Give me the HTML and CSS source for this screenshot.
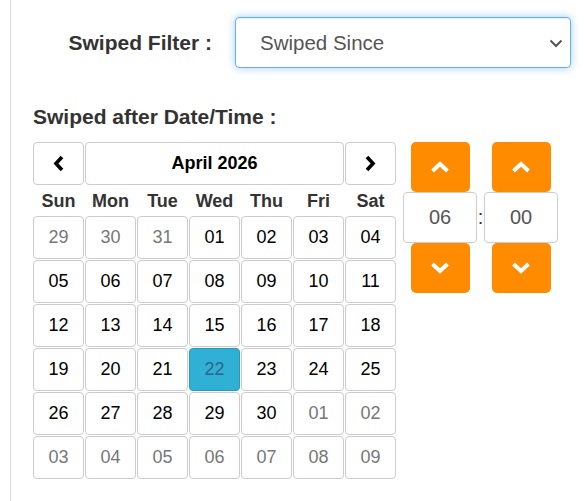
FILE: index.html
```html
<!DOCTYPE html>
<html>
<head>
<meta charset="utf-8">
<link rel="stylesheet" href="styles.css">
</head>
<body>
<div class="page">
  <div class="filter-row">
    <label class="filter-label">Swiped Filter :</label>
    <div class="select">
      <span>Swiped Since</span>
      <svg class="caret" width="14" height="9" viewBox="0 0 14 9"><polyline points="1.5,1.5 7,7 12.5,1.5" fill="none" stroke="#555" stroke-width="2"/></svg>
    </div>
  </div>
  <div class="section-title">Swiped after Date/Time :</div>
  <div class="picker">
    <div class="calendar">
      <div class="btn nav"><svg width="11" height="17" viewBox="0 0 11 17"><polyline points="9,2 3,8.5 9,15" fill="none" stroke="#000" stroke-width="3.6"/></svg></div>
      <div class="btn title">April 2026</div>
      <div class="btn nav"><svg width="11" height="17" viewBox="0 0 11 17"><polyline points="2,2 8,8.5 2,15" fill="none" stroke="#000" stroke-width="3.6"/></svg></div>
      <div class="dow">Sun</div><div class="dow">Mon</div><div class="dow">Tue</div><div class="dow">Wed</div><div class="dow">Thu</div><div class="dow">Fri</div><div class="dow">Sat</div>
      <div class="btn day old">29</div><div class="btn day old">30</div><div class="btn day old">31</div><div class="btn day">01</div><div class="btn day">02</div><div class="btn day">03</div><div class="btn day">04</div>
      <div class="btn day">05</div><div class="btn day">06</div><div class="btn day">07</div><div class="btn day">08</div><div class="btn day">09</div><div class="btn day">10</div><div class="btn day">11</div>
      <div class="btn day">12</div><div class="btn day">13</div><div class="btn day">14</div><div class="btn day">15</div><div class="btn day">16</div><div class="btn day">17</div><div class="btn day">18</div>
      <div class="btn day">19</div><div class="btn day">20</div><div class="btn day">21</div><div class="btn day active">22</div><div class="btn day">23</div><div class="btn day">24</div><div class="btn day">25</div>
      <div class="btn day">26</div><div class="btn day">27</div><div class="btn day">28</div><div class="btn day">29</div><div class="btn day">30</div><div class="btn day old">01</div><div class="btn day old">02</div>
      <div class="btn day old">03</div><div class="btn day old">04</div><div class="btn day old">05</div><div class="btn day old">06</div><div class="btn day old">07</div><div class="btn day old">08</div><div class="btn day old">09</div>
    </div>
    <div class="time">
      <div class="tcol">
        <div class="obtn"><svg width="20" height="12" viewBox="0 0 20 12"><polyline points="2.5,10 10,3 17.5,10" fill="none" stroke="#fff" stroke-width="4"/></svg></div>
        <div class="tinput">06</div>
        <div class="obtn"><svg width="20" height="12" viewBox="0 0 20 12"><polyline points="2.5,2 10,9 17.5,2" fill="none" stroke="#fff" stroke-width="4"/></svg></div>
      </div>
      <div class="colon">:</div>
      <div class="tcol">
        <div class="obtn"><svg width="20" height="12" viewBox="0 0 20 12"><polyline points="2.5,10 10,3 17.5,10" fill="none" stroke="#fff" stroke-width="4"/></svg></div>
        <div class="tinput">00</div>
        <div class="obtn"><svg width="20" height="12" viewBox="0 0 20 12"><polyline points="2.5,2 10,9 17.5,2" fill="none" stroke="#fff" stroke-width="4"/></svg></div>
      </div>
    </div>
  </div>
</div>
</body>
</html>
```

FILE: styles.css
```css
html, body {
  margin: 0;
  padding: 0;
  background: #fff;
}
body {
  font-family: "Liberation Sans", Arial, sans-serif;
  color: #333;
}
.page {
  margin-left: 10px;
  border-left: 1px solid #ddd;
  min-height: 501px;
  box-sizing: border-box;
  padding-top: 17px;
}
.filter-row {
  display: flex;
  align-items: center;
  gap: 23px;
}
.filter-label {
  width: 201px;
  text-align: right;
  font-weight: bold;
  font-size: 21px;
  color: #333;
}
.select {
  width: 336px;
  height: 51px;
  box-sizing: border-box;
  border: 1px solid #66afe9;
  border-radius: 4px;
  box-shadow: inset 0 1px 1px rgba(0,0,0,.075), 0 0 8px rgba(102,175,233,.6);
  display: flex;
  align-items: center;
  justify-content: space-between;
  padding: 0 7px 0 24px;
  font-size: 20.5px;
  color: #555;
}
.caret {
  display: block;
  margin-top: 1px;
}
.section-title {
  margin: 37px 0 0 22px;
  font-weight: bold;
  font-size: 21px;
  line-height: 24px;
  color: #333;
}
.picker {
  display: flex;
  align-items: flex-start;
  gap: 7px;
  margin: 13px 0 0 22px;
}
.calendar {
  display: grid;
  grid-template-columns: repeat(7, 51px);
  grid-template-rows: 43px 29px repeat(6, 43px);
  gap: 1px;
}
.btn {
  box-sizing: border-box;
  border: 1px solid #ccc;
  border-radius: 4px;
  background: #fff;
  display: flex;
  align-items: center;
  justify-content: center;
  font-size: 18px;
  color: #000;
}
.title {
  grid-column: span 5;
  font-weight: bold;
  font-size: 18px;
}
.dow {
  display: flex;
  align-items: center;
  justify-content: center;
  font-weight: bold;
  font-size: 18px;
  color: #333;
  padding-top: 2px;
}
.day.old {
  color: #777;
}
.day.active {
  background: #31b0d5;
  border-color: #269abc;
  color: #2f6585;
}
.time {
  display: flex;
  align-items: center;
}
.tcol {
  width: 74px;
  display: flex;
  flex-direction: column;
  align-items: center;
}
.obtn {
  width: 59px;
  height: 50px;
  background: #ff8b00;
  border-radius: 5px;
  display: flex;
  align-items: center;
  justify-content: center;
}
.obtn svg {
  display: block;
}
.tinput {
  width: 74px;
  height: 51px;
  box-sizing: border-box;
  border: 1px solid #ccc;
  border-radius: 4px;
  display: flex;
  align-items: center;
  justify-content: center;
  font-size: 20px;
  color: #555;
}
.colon {
  width: 7px;
  text-align: center;
  font-size: 20px;
  color: #333;
}
```
